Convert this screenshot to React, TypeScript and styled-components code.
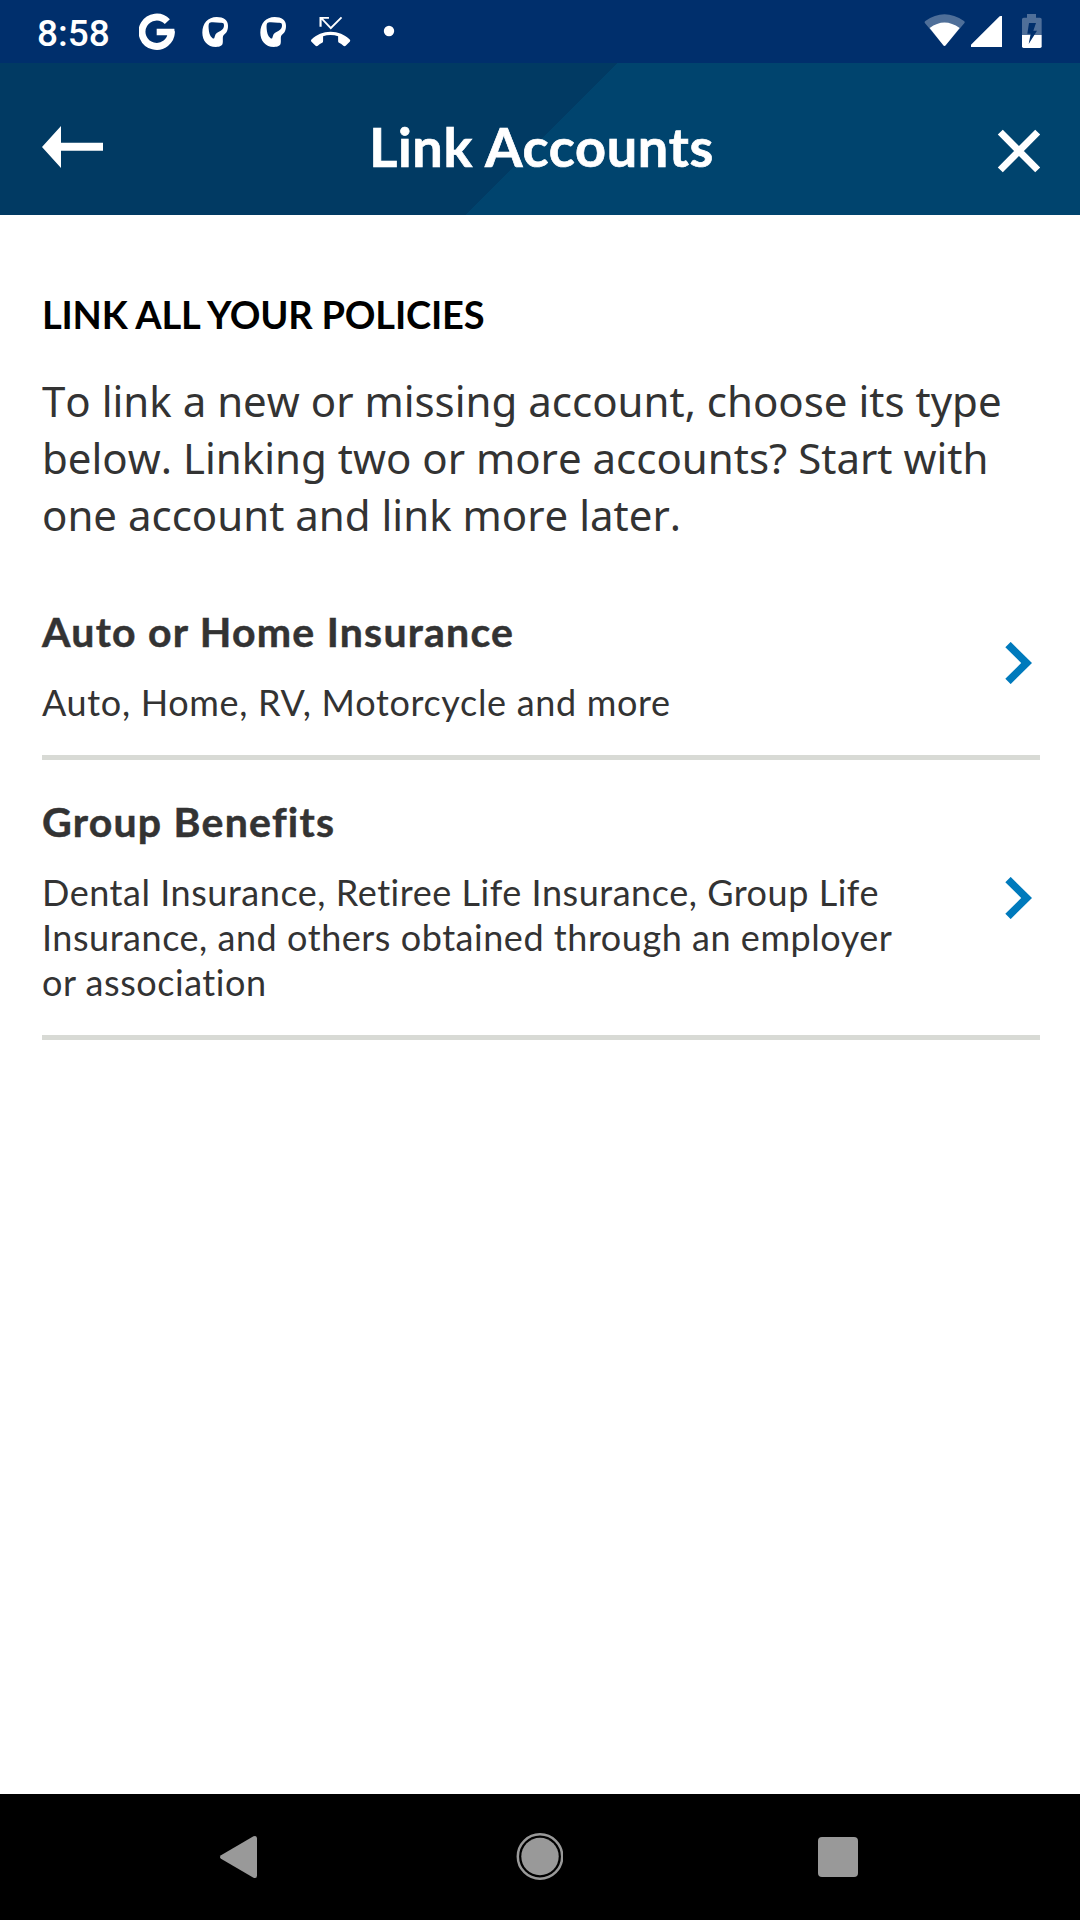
import React from "react";
import styled, { createGlobalStyle } from "styled-components";

const GlobalStyle = createGlobalStyle`
  * { box-sizing: border-box; }
  body { margin: 0; background: #fff; }
`;

const Screen = styled.div`
  display: flex;
  flex-direction: column;
  width: 1080px;
  height: 1920px;
  background: #ffffff;
  font-family: Lato, "Liberation Sans", sans-serif;
  color: #333333;
`;

const StatusBar = styled.div`
  display: flex;
  align-items: center;
  justify-content: space-between;
  height: 63px;
  padding: 0 36px 0 37px;
  background: #002f6c;
`;

const StatusGroup = styled.div`
  display: flex;
  align-items: center;
`;

const Clock = styled.span`
  width: 102px;
  padding-top: 4px;
  font: 500 37px/44px Roboto, sans-serif;
  color: #ffffff;
`;

const StatusIcon = styled.svg<{ $width: number }>`
  display: block;
  width: ${(p) => p.$width}px;
  height: 63px;
  fill: #ffffff;
`;

const Header = styled.header`
  display: grid;
  grid-template-columns: 62px 1fr 44px;
  align-items: start;
  height: 152px;
  padding: 0 39px 0 41px;
  background: linear-gradient(to right bottom, #013a63 0 50%, #00446e 50%) 465px 0 / 152px 152px no-repeat,
    linear-gradient(to right, #013a63 465px, #00446e 465px);
`;

const IconButton = styled.button<{ $top: number }>`
  display: flex;
  margin: ${(p) => p.$top}px 0 0;
  padding: 0;
  border: 0;
  background: none;
`;

const Title = styled.h1`
  margin: 52px 0 0;
  padding-right: 17px;
  font-size: 54px;
  line-height: 64px;
  font-weight: 700;
  letter-spacing: 0.7px;
  text-align: center;
  color: #ffffff;
  -webkit-text-stroke: 0.7px currentColor;
`;

const Main = styled.main`
  flex: 1;
  padding: 76px 40px 0 42px;
`;

const SectionHeading = styled.h2`
  margin: 0;
  font-size: 38px;
  line-height: 46px;
  font-weight: 700;
  letter-spacing: -0.2px;
  color: #000000;
`;

const Intro = styled.p`
  margin: 35px 0 27px;
  font: 400 42px/57px "Noto Sans", sans-serif;
  font-kerning: none;
`;

const Row = styled.a`
  display: flex;
  align-items: center;
  justify-content: space-between;
  padding-right: 7px;
  border-bottom: 5px solid #d8dad5;
`;

const RowText = styled.div`
  width: 870px;
  padding: 38px 0 30px;
`;

const RowTitle = styled.h3`
  margin: 0 0 24px;
  font-size: 41px;
  line-height: 48px;
  font-weight: 700;
  letter-spacing: 1.25px;
  -webkit-text-stroke: 0.5px currentColor;
`;

const RowDetail = styled.p<{ $tracking: number }>`
  margin: 0;
  font-size: 36px;
  line-height: 45px;
  letter-spacing: ${(p) => p.$tracking}px;
`;

const NavBar = styled.nav`
  display: flex;
  align-items: center;
  justify-content: space-between;
  height: 126px;
  padding: 0 218px 0 215px;
  background: #000000;
`;

const NavIcon = styled.svg`
  display: block;
  width: 48px;
  height: 48px;
  fill: #999999;
`;

const policies = [
  {
    title: "Auto or Home Insurance",
    detail: "Auto, Home, RV, Motorcycle and more",
    tracking: 0.67,
  },
  {
    title: "Group Benefits",
    detail:
      "Dental Insurance, Retiree Life Insurance, Group Life Insurance, and others obtained through an employer or association",
    tracking: 0.54,
  },
];

const GoogleIcon = () => (
  <StatusIcon $width={56} viewBox="417 0 168 189">
    <path d="M502 65A44 44 0 1 0 514 94" fill="none" stroke="#fff" strokeWidth="21" />
    <path d="M470 86H523Q525 96 522 106H470Z" />
  </StatusIcon>
);

const LeafIcon = () => (
  <StatusIcon $width={58} viewBox="585 0 174 189">
    <path
      fillRule="evenodd"
      d="M650 51C671 51 684 61 684 77C684 92 679 99 672 104C666 109 670 120 668 130C667 138 658 141 648 141C622 141 607 121 607 98C607 70 624 51 650 51ZM629 68C626 70 625 76 626 86C627 98 629 107 637 114C641 118 643 115 644 110C646 100 653 97 661 93C669 89 672 84 672 76C672 70 670 68 664 68C652 69 641 65 629 68Z"
    />
  </StatusIcon>
);

const MissedCallIcon = () => (
  <StatusIcon $width={58} viewBox="933 0 174 189">
    <g transform="translate(933 36.5) scale(4.9)">
      <path d="M23.71 16.67C20.66 13.78 16.54 12 12 12 7.46 12 3.34 13.78.29 16.67c-.18.18-.29.43-.29.71 0 .28.11.53.29.71l2.48 2.48c.18.18.43.29.71.29.27 0 .52-.11.7-.28.79-.74 1.69-1.36 2.66-1.85.33-.16.56-.5.56-.9v-3.1c1.45-.48 3-.73 4.6-.73 1.6 0 3.15.25 4.6.72v3.1c0 .39.23.74.56.9.98.49 1.87 1.12 2.66 1.85.18.18.43.28.7.28.28 0 .53-.11.71-.29l2.48-2.48c.18-.18.29-.43.29-.71 0-.28-.11-.53-.29-.71z" />
      <path d="M6.5 4.6L12.1 10.6l7-7-.8-.8-6.2 6.1-4.7-4.9H11V3H5.2v6h1.3z" />
    </g>
  </StatusIcon>
);

const DotIcon = () => (
  <StatusIcon $width={40} viewBox="1107 0 120 189">
    <circle cx="1167" cy="93" r="15.5" />
  </StatusIcon>
);

const WifiIcon = () => (
  <StatusIcon $width={45} viewBox="132 0 135 189">
    <path d="M190 136L134 68Q133 65 136 63Q193 23 252 63Q255 65 254 68L197 136Q193 140 190 136Z" opacity="0.31" />
    <path d="M190 136L149 84Q193 51 239 84L197 136Q193 140 190 136Z" />
  </StatusIcon>
);

const SignalIcon = () => (
  <StatusIcon $width={35} viewBox="267 0 105 189">
    <path d="M273 141V134L359 49Q361 47 366 48V141Z" />
  </StatusIcon>
);

const BatteryIcon = () => (
  <StatusIcon $width={40} viewBox="372 0 120 189">
    <path d="M441 42H468V53H480Q485 53 485 58V105H426V58Q426 53 431 53H441Z" opacity="0.31" />
    <path d="M426 105H485V139Q485 144 480 144H431Q426 144 426 139Z" />
    <path d="M447 69H468L460 92H471L446 132L452 101H442Z" fill="#002f6c" />
  </StatusIcon>
);

const BackArrow = () => (
  <svg width="62" height="42" viewBox="41 126 62 42" fill="#fff">
    <path d="M42 147L61 126V142.7H103V150.7H61V168Z" />
  </svg>
);

const CloseIcon = () => (
  <svg width="44" height="44" viewBox="997 128.5 44 44" fill="none" stroke="#fff" strokeWidth="7">
    <path d="M1000.3 131.6L1037.7 169.4M1037.7 131.6L1000.3 169.4" />
  </svg>
);

const Chevron = () => (
  <svg width="28" height="42" viewBox="0 0 28 42" fill="none" stroke="#007abc" strokeWidth="7.6">
    <path d="M3 2.6L21.6 21L3 39.4" />
  </svg>
);

export default function App() {
  return (
    <Screen>
      <GlobalStyle />
      <StatusBar>
        <StatusGroup>
          <Clock>8:58</Clock>
          <GoogleIcon />
          <LeafIcon />
          <LeafIcon />
          <MissedCallIcon />
          <DotIcon />
        </StatusGroup>
        <StatusGroup>
          <WifiIcon />
          <SignalIcon />
          <BatteryIcon />
        </StatusGroup>
      </StatusBar>
      <Header>
        <IconButton $top={63} aria-label="Back">
          <BackArrow />
        </IconButton>
        <Title>Link Accounts</Title>
        <IconButton $top={66} aria-label="Close">
          <CloseIcon />
        </IconButton>
      </Header>
      <Main>
        <SectionHeading>LINK ALL YOUR POLICIES</SectionHeading>
        <Intro>
          To link a new or missing account, choose its type below. Linking two or more accounts? Start with one
          account and link more later.
        </Intro>
        {policies.map((policy) => (
          <Row key={policy.title}>
            <RowText>
              <RowTitle>{policy.title}</RowTitle>
              <RowDetail $tracking={policy.tracking}>{policy.detail}</RowDetail>
            </RowText>
            <Chevron />
          </Row>
        ))}
      </Main>
      <NavBar>
        <NavIcon viewBox="215 1833 48 48">
          <path d="M221 1855.2L253.5 1836.3Q257 1835 257 1838.5V1875.5Q257 1879 253.5 1877.7L221 1858.8Q219 1857 221 1855.2Z" />
        </NavIcon>
        <NavIcon viewBox="514.5 1833 48 48">
          <circle cx="539.5" cy="1856.5" r="18.7" />
          <circle cx="539.5" cy="1856.5" r="22.2" fill="none" stroke="#999" strokeWidth="2.5" />
        </NavIcon>
        <NavIcon viewBox="814 1833 48 48">
          <rect x="818" y="1837" width="40" height="40" rx="4" />
        </NavIcon>
      </NavBar>
    </Screen>
  );
}
